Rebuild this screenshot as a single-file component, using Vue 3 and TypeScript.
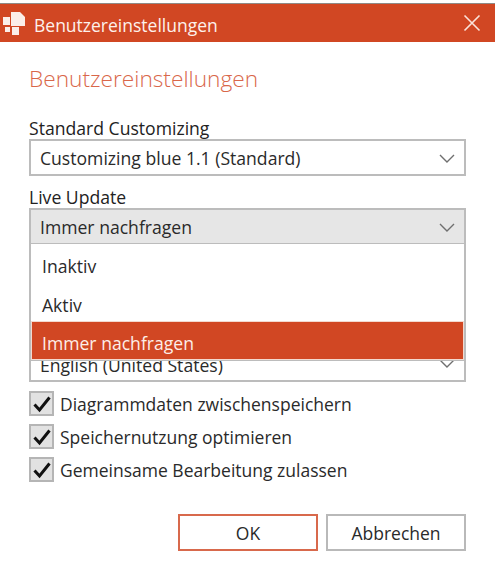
<script setup lang="ts">
const options = ['Inaktiv', 'Aktiv', 'Immer nachfragen']
const checks = ['Diagrammdaten zwischenspeichern', 'Speichernutzung optimieren', 'Gemeinsame Bearbeitung zulassen']
</script>

<template>
  <div class="dialog">
    <header class="titlebar">
      <svg class="logo" width="26" height="26" viewBox="0 0 26 26">
        <path d="M10 2h9l5 5v9h-14z" fill="#fbeee9" />
        <rect x="2" y="7" width="7" height="8" fill="#fbeee9" />
        <rect x="4" y="17" width="5" height="5" fill="#fbeee9" />
        <rect x="11" y="17" width="7" height="8" fill="#fbeee9" />
      </svg>
      <span class="wintitle">Benutzereinstellungen</span>
      <svg class="close" width="18" height="18" viewBox="0 0 18 18">
        <path d="M1.500 1.500 16.500 16.500M16.500 1.500 1.500 16.500" stroke="#fbe3da" stroke-width="1.600" fill="none" />
      </svg>
    </header>

    <main class="body">
      <h1 class="heading">Benutzereinstellungen</h1>

      <label class="label">Standard Customizing</label>
      <div class="select">
        <span>Customizing blue 1.1 (Standard)</span>
        <svg class="chev" width="16" height="9" viewBox="0 0 16 9"><path d="M1 1l7 7 7-7" fill="none" stroke="#6f6f6f" stroke-width="1.400" /></svg>
      </div>

      <label class="label second">Live Update</label>
      <div class="dropdown">
        <div class="select open">
          <span>Immer nachfragen</span>
          <svg class="chev" width="16" height="9" viewBox="0 0 16 9"><path d="M1 1l7 7 7-7" fill="none" stroke="#6f6f6f" stroke-width="1.400" /></svg>
        </div>
        <ul class="menu">
          <li v-for="(o, i) in options" :key="o" class="item" :class="{ active: i === 2 }">{{ o }}</li>
        </ul>
      </div>

      <div class="select lang">
        <span class="langtext">English (United States)</span>
        <svg class="chev langchev" width="16" height="9" viewBox="0 0 16 9"><path d="M1 1l7 7 7-7" fill="none" stroke="#6f6f6f" stroke-width="1.400" /></svg>
      </div>

      <div class="checks">
        <div v-for="c in checks" :key="c" class="check">
          <span class="box">
            <svg width="20" height="18" viewBox="0 0 20 18"><path d="M2.500 9.500 7.500 15 17.500 2.500" fill="none" stroke="#111" stroke-width="3" /></svg>
          </span>
          <span class="checktext">{{ c }}</span>
        </div>
      </div>

      <div class="actions">
        <button class="btn ok">OK</button>
        <button class="btn">Abbrechen</button>
      </div>
    </main>
  </div>
</template>

<style>
html, body { margin: 0; background: #fff; }
</style>

<style scoped>
.dialog {
  width: 495px;
  height: 570px;
  overflow: hidden;
  background: #fff;
  font-family: "Open Sans", "Noto Sans", sans-serif;
  color: #2a2a2a;
  box-sizing: border-box;
  padding-top: 3px;
}
.titlebar {
  height: 39px;
  box-sizing: border-box;
  background: #d14723;
  border-top: 1px solid #8f8a86;
  display: flex;
  align-items: center;
  padding: 0 14px 0 1px;
  color: #fdf1ec;
}
.logo { flex: none; margin-right: 7px; }
.wintitle { font-size: 17.500px; flex: 1; padding-top: 3px; }
.close { flex: none; }
.body { padding: 0 29px; }
.heading {
  margin: 22px 0 0;
  font-size: 22.700px;
  line-height: 30px;
  font-weight: 300;
  color: #d9674a;
}
.label {
  display: block;
  font-size: 17.600px;
  line-height: 22px;
  color: #222;
}
.body .label { margin-top: 23px; }
.body .label.second { margin-top: 10px; }
.select {
  height: 37px;
  box-sizing: border-box;
  border: 2px solid #bcbcbc;
  background: #fff;
  display: flex;
  align-items: center;
  justify-content: space-between;
  padding: 1px 9px 0 9px;
  font-size: 17.600px;
}
.select.open { background: #e6e6e6; }
.dropdown { position: relative; }
.menu {
  position: absolute;
  z-index: 2;
  top: 36px;
  left: 0;
  right: 0;
  margin: 0;
  padding: 0 1px 2px;
  list-style: none;
  background: #fff;
  border: 2px solid #bcbcbc;
  border-top: 0;
  box-sizing: border-box;
  height: 117px;
}
.item {
  height: 39px;
  box-sizing: border-box;
  padding: 4px 0 0 10px;
  display: flex;
  align-items: center;
  font-size: 17.600px;
}
.active {
  background: #d14723;
  color: #fdeee8;
  height: 37px;
  outline: 1px solid #f3d9cf;
}
.lang { margin-top: 100px; align-items: flex-end; padding-bottom: 5px; }
.langtext { line-height: 20px; }
.langchev { margin-bottom: 7px; }
.checks { margin-top: 9px; display: flex; flex-direction: column; gap: 8px; }
.check { display: flex; align-items: center; height: 25px; }
.box {
  width: 25px;
  height: 25px;
  box-sizing: border-box;
  border: 2px solid #b5b5b5;
  background: #e2e2e2;
  display: flex;
  align-items: center;
  justify-content: center;
  flex: none;
  margin-right: 6px;
}
.checktext { font-size: 17.500px; }
.actions { margin-top: 32px; display: flex; justify-content: flex-end; gap: 8px; }
.btn {
  width: 140px;
  height: 37px;
  box-sizing: border-box;
  border: 2px solid #b9b9b9;
  background: #fff;
  font: inherit;
  font-size: 17.500px;
  color: #2a2a2a;
  padding: 0;
}
.btn.ok { border-color: #d8694c; }
</style>
